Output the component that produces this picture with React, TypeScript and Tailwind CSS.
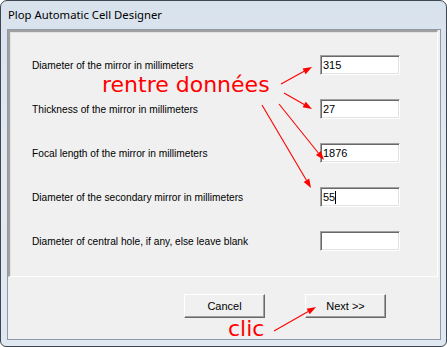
import React from "react";

const rows: { label: string; value: string; caret?: boolean }[] = [
  { label: "Diameter of the mirror in millimeters", value: "315" },
  { label: "Thickness of the mirror in millimeters", value: "27" },
  { label: "Focal length of the mirror in millimeters", value: "1876" },
  { label: "Diameter of the secondary mirror in millimeters", value: "55", caret: true },
  { label: "Diameter of central hole, if any, else leave blank", value: "" },
];

function Arrow({ x1, y1, x2, y2 }: { x1: number; y1: number; x2: number; y2: number }) {
  const a = Math.atan2(y2 - y1, x2 - x1);
  const L = 9;
  const w = 3.2;
  const bx = x2 - L * Math.cos(a);
  const by = y2 - L * Math.sin(a);
  const px = -Math.sin(a) * w;
  const py = Math.cos(a) * w;
  return (
    <g>
      <line x1={x1} y1={y1} x2={bx} y2={by} stroke="#ff0000" strokeWidth={1.1} />
      <polygon points={`${x2},${y2} ${bx + px},${by + py} ${bx - px},${by - py}`} fill="#ff0000" />
    </g>
  );
}

export default function App() {
  return (
    <div className="relative w-[447px] h-[347px] bg-white overflow-hidden" style={{ fontFamily: '"Liberation Sans", Arial, sans-serif' }}>
      <div className="w-[447px] h-[347px] rounded-t-[7px] rounded-b-[6px] border border-[#3f4650] bg-gradient-to-b from-[#d8e2ed] via-[#e3e9f1] to-[#dfe7f0] flex flex-col">
        <div className="h-[28px] flex items-center pl-[7px] text-[11.3px] text-black" style={{ fontFamily: '"Noto Sans", "Open Sans", sans-serif' }}>
          Plop Automatic Cell Designer
        </div>
        <div className="ml-[6px] w-[434px] h-[311px] border border-[#8e99a6] bg-[#f0f0f0] flex flex-col">
          <div className="ml-0 mr-[2px] h-[247px] border-t-2 border-l-2 border-t-[#a0a0a0] border-l-[#a0a0a0] border-b border-r border-b-white border-r-white shadow-[inset_1px_1px_0_#e3e3e3] pl-[22px] pt-[23px] flex flex-col gap-[24px]">
            {rows.map((r) => (
              <div key={r.label} className="h-[20px] flex items-center">
                <div className="w-[288px] text-[10.2px] text-black leading-none pt-[3px]">{r.label}</div>
                <div className="w-[80px] h-[20px] border border-t-[#a0a0a0] border-l-[#a0a0a0] border-b-white border-r-white bg-white shadow-[inset_1px_1px_0_#696969,inset_-1px_-1px_0_#e3e3e3] flex items-center pl-[2px] text-[11px] text-black">
                  <span>{r.value}</span>
                  {r.caret && <span className="inline-block w-px h-[13px] bg-black" />}
                </div>
              </div>
            ))}
          </div>
          <div className="flex pl-[176px] pt-[17px] gap-[40px]">
            <button className="w-[81px] h-[24px] bg-[#f0f0f0] border border-t-white border-l-white border-b-[#696969] border-r-[#696969] shadow-[inset_-1px_-1px_0_#a0a0a0] text-[11px] text-black flex items-center justify-center">
              Cancel
            </button>
            <button className="w-[81px] h-[24px] bg-[#f0f0f0] border border-t-white border-l-white border-b-[#696969] border-r-[#696969] shadow-[inset_-1px_-1px_0_#a0a0a0] text-[11px] text-black flex items-center justify-center">
              Next &gt;&gt;
            </button>
          </div>
        </div>
      </div>

      <div className="absolute left-[102px] top-[74px] text-[22px] leading-none text-[#ff0000] whitespace-nowrap" style={{ fontFamily: '"Comic Sans MS", "DejaVu Sans", sans-serif' }}>
        rentre données
      </div>
      <div className="absolute left-[228px] top-[318px] text-[22px] leading-none text-[#ff0000]" style={{ fontFamily: '"Comic Sans MS", "DejaVu Sans", sans-serif' }}>
        clic
      </div>
      <svg className="absolute left-0 top-0" width={447} height={347}>
        <Arrow x1={281} y1={84} x2={312} y2={67} />
        <Arrow x1={284} y1={93} x2={312} y2={109} />
        <Arrow x1={279} y1={104} x2={324} y2={160} />
        <Arrow x1={262} y1={105} x2={311} y2={188} />
        <Arrow x1={274} y1={331} x2={316} y2={307} />
      </svg>
    </div>
  );
}
